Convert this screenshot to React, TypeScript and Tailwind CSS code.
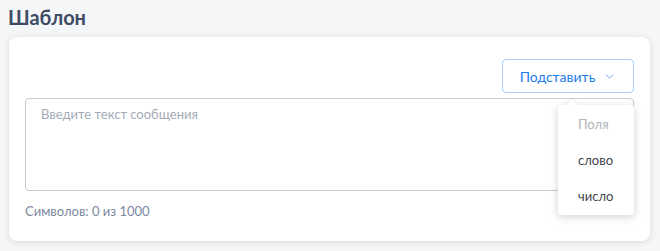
import React from 'react';
import { ChevronDown } from 'lucide-react';

const App: React.FC = () => {
  const fields = ['слово', 'число'];

  return (
    <div className="w-[660px] h-[251px] bg-[#f5f6f7] font-['Lato',sans-serif] overflow-hidden">
      <h2 className="pl-2 pt-[3px] text-[20px] leading-7 font-bold text-[#3d4b64]">Шаблон</h2>

      <div className="relative mt-[6px] ml-[9px] w-[641px] h-[204px] bg-white rounded-lg shadow-[0_1px_6px_rgba(0,0,0,0.12)] px-4 pt-[22px]">
        <div className="flex justify-end">
          <button className="flex items-center gap-[8px] h-[34px] w-[132px] justify-center border border-[#a9cbf7] rounded-[4px] text-[14px] text-[#1c7cf0]">
            Подставить
            <ChevronDown size={13} strokeWidth={1.6} className="text-[#5f9bec]" />
          </button>
        </div>

        <textarea
          placeholder="Введите текст сообщения"
          className="mt-[5px] block w-full h-[93px] resize-none border border-[#c6cbd3] rounded-[4px] px-[15px] py-[6px] text-[13px] text-[#3a3f47] placeholder:text-[#a4abb7] outline-none"
        />

        <div className="mt-[11px] text-[13px] text-[#7b88a1]">Символов: 0 из 1000</div>

        {/* Dropdown menu */}
        <div className="absolute left-[549px] top-[68px] w-[76px] pt-[2px] bg-white rounded-[3px] shadow-[0_2px_8px_rgba(0,0,0,0.18)]">
          <div className="absolute -top-[4px] left-[10px] w-2 h-2 bg-white rotate-45 shadow-[-1px_-1px_2px_rgba(0,0,0,0.06)]" />
          <div className="relative flex items-center h-9 pl-5 text-[13px] text-[#b1b5bb]">Поля</div>
          {fields.map((f) => (
            <div key={f} className="relative flex items-center h-9 pl-5 text-[13px] text-[#40454d]">
              {f}
            </div>
          ))}
        </div>
      </div>
    </div>
  );
};

export default App;
